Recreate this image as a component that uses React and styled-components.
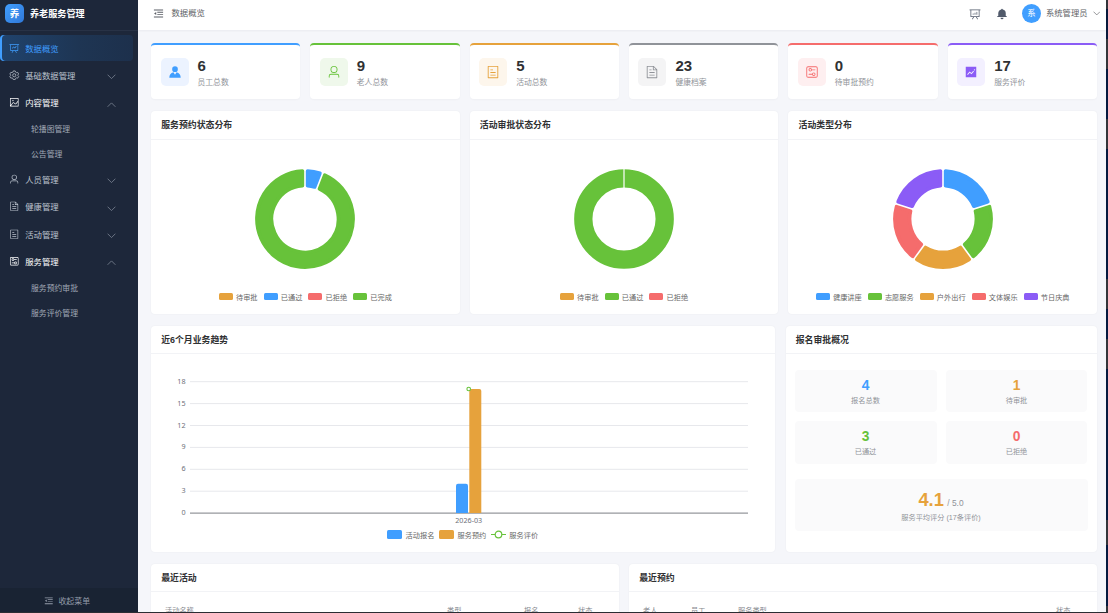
import React from 'react'
import styled, { createGlobalStyle, css } from 'styled-components'

const BLUE = '#409eff'
const GREEN = '#67c23a'
const ORANGE = '#e6a23c'
const RED = '#f56c6c'
const PURPLE = '#8b5cf6'
const GRAY = '#909399'

const icons = {
  dataLine: 'M359.168 768H160a32 32 0 0 1-32-32V192H64a32 32 0 0 1 0-64h896a32 32 0 1 1 0 64h-64v544a32 32 0 0 1-32 32H665.216l110.848 192h-73.856L591.36 768H433.024L322.176 960H248.32zM832 192H192v512h640zM342.656 534.656a32 32 0 1 1-45.312-45.312L444.992 341.76l125.44 94.08L679.04 300.032a32 32 0 1 1 49.92 39.936L581.632 524.224 451.008 426.24 342.656 534.592z',
  dataAnalysis: 'm665.216 768 110.848 192h-73.856L591.36 768H433.024L322.176 960H248.32l110.848-192H160a32 32 0 0 1-32-32V192H64a32 32 0 0 1 0-64h896a32 32 0 1 1 0 64h-64v544a32 32 0 0 1-32 32zM832 192H192v512h640zM352 448a32 32 0 0 1 32 32v64a32 32 0 0 1-64 0v-64a32 32 0 0 1 32-32m160-64a32 32 0 0 1 32 32v128a32 32 0 0 1-64 0V416a32 32 0 0 1 32-32m160-64a32 32 0 0 1 32 32v192a32 32 0 1 1-64 0V352a32 32 0 0 1 32-32',
  document: 'M832 384H576V128H192v768h640zm-26.496-64L640 154.496V320zM160 64h480l256 256v608a32 32 0 0 1-32 32H160a32 32 0 0 1-32-32V96a32 32 0 0 1 32-32m160 448h384v64H320zm0-192h160v64H320zm0 384h384v64H320z',
  tickets: 'M192 128v768h640V128zm-32-64h704a32 32 0 0 1 32 32v832a32 32 0 0 1-32 32H160a32 32 0 0 1-32-32V96a32 32 0 0 1 32-32m160 448h384v64H320zm0-192h192v64H320zm0 384h384v64H320z',
  user: 'M512 512a192 192 0 1 0 0-384 192 192 0 0 0 0 384m0 64a256 256 0 1 1 0-512 256 256 0 0 1 0 512m320 320v-96a96 96 0 0 0-96-96H288a96 96 0 0 0-96 96v96a32 32 0 1 1-64 0v-96a160 160 0 0 1 160-160h448a160 160 0 0 1 160 160v96a32 32 0 1 1-64 0',
  avatar: 'M628.736 528.896A416 416 0 0 1 928 928H96a415.872 415.872 0 0 1 299.264-399.104L512 704zM720 304a208 208 0 1 1-416 0 208 208 0 0 1 416 0',
  setUp: 'M224 160a64 64 0 0 0-64 64v576a64 64 0 0 0 64 64h576a64 64 0 0 0 64-64V224a64 64 0 0 0-64-64zm0-64h576a128 128 0 0 1 128 128v576a128 128 0 0 1-128 128H224A128 128 0 0 1 96 800V224A128 128 0 0 1 224 96M384 416a64 64 0 1 0 0-128 64 64 0 0 0 0 128m0 64a128 128 0 1 1 0-256 128 128 0 0 1 0 256M480 320h256q32 0 32 32t-32 32H480q-32 0-32-32t32-32m160 416a64 64 0 1 0 0-128 64 64 0 0 0 0 128m0 64a128 128 0 1 1 0-256 128 128 0 0 1 0 256M288 640h256q32 0 32 32t-32 32H288q-32 0-32-32t32-32',
  picture: 'M160 160v704h704V160zm-32-64h768a32 32 0 0 1 32 32v768a32 32 0 0 1-32 32H128a32 32 0 0 1-32-32V128a32 32 0 0 1 32-32M384 288q64 0 64 64t-64 64-64-64 64-64M185.408 876.992l-50.816-38.912L350.72 556.032a96 96 0 0 1 134.592-17.856l1.856 1.472 122.88 99.136a32 32 0 0 0 44.992-4.864l216-269.888 49.92 39.936-215.808 269.824-.256.32a96 96 0 0 1-135.04 14.464l-122.88-99.072-.64-.512a32 32 0 0 0-44.8 5.952z',
  trend: 'M128 896V128h768v768zm291.712-327.296 128 102.4 180.16-201.792-47.744-42.624-139.84 156.608-128-102.4-180.16 201.792 47.744 42.624zM816 352a48 48 0 1 0-96 0 48 48 0 0 0 96 0',
  bell: 'M640 832a128 128 0 0 1-256 0zm192-64H134.4a38.4 38.4 0 0 1 0-76.8H192V448c0-154.88 110.08-284.16 256.32-313.6a64 64 0 1 1 127.36 0A320.13 320.13 0 0 1 832 448v243.2h57.6a38.4 38.4 0 0 1 0 76.8z',
  fold: 'M940 150H84v92h856zm0 210H400v80h540zm0 220H400v80h540zm0 204H84v92h856zM300 380 100 512l200 132z',
}

function Icon({ name, size = 11 }) {
  if (name === 'setting') {
    return (
      <svg width={size} height={size} viewBox="0 0 1024 1024" fill="none" stroke="currentColor" strokeWidth="74" strokeLinejoin="round">
        <path d="M420 90h184l40 118 84 48 122-24 92 158-82 94v56l82 94-92 158-122-24-84 48-40 118H420l-40-118-84-48-122 24-92-158 82-94v-56l-82-94 92-158 122 24 84-48z" />
        <circle cx="512" cy="512" r="155" />
      </svg>
    )
  }
  return (
    <svg width={size} height={size} viewBox="0 0 1024 1024" fill="currentColor">
      <path d={icons[name]} />
    </svg>
  )
}

function Arrow({ up, width = 9 }) {
  return (
    <svg width={width} height={width / 2 + 1} viewBox="0 0 9 5.5" fill="none" stroke="currentColor" strokeWidth="0.8">
      <path d={up ? 'M0.6 4.8 4.5 0.9 8.4 4.8' : 'M0.6 0.7 4.5 4.6 8.4 0.7'} />
    </svg>
  )
}

const menu = [
  { icon: 'dataLine', label: '数据概览', active: true },
  { icon: 'setting', label: '基础数据管理', children: [] },
  { icon: 'picture', label: '内容管理', open: true, children: ['轮播图管理', '公告管理'] },
  { icon: 'user', label: '人员管理', children: [] },
  { icon: 'document', label: '健康管理', children: [] },
  { icon: 'tickets', label: '活动管理', children: [] },
  { icon: 'setUp', label: '服务管理', open: true, children: ['服务预约审批', '服务评价管理'] },
]

const stats = [
  { icon: 'avatar', value: 6, label: '员工总数', color: BLUE, bg: '#ecf3ff' },
  { icon: 'user', value: 9, label: '老人总数', color: GREEN, bg: '#eff8eb' },
  { icon: 'tickets', value: 5, label: '活动总数', color: ORANGE, bg: '#fdf6ec' },
  { icon: 'document', value: 23, label: '健康档案', color: GRAY, bg: '#f4f4f5' },
  { icon: 'setUp', value: 0, label: '待审批预约', color: RED, bg: '#feeff0' },
  { icon: 'trend', value: 17, label: '服务评价', color: PURPLE, bg: '#f3f0ff' },
]

const pies = [
  {
    title: '服务预约状态分布',
    slices: [[1, BLUE], [16, GREEN]],
    legend: [['待审批', ORANGE], ['已通过', BLUE], ['已拒绝', RED], ['已完成', GREEN]],
  },
  {
    title: '活动审批状态分布',
    slices: [[5, GREEN]],
    legend: [['待审批', ORANGE], ['已通过', GREEN], ['已拒绝', RED]],
  },
  {
    title: '活动类型分布',
    slices: [[1, BLUE], [1, GREEN], [1, ORANGE], [1, RED], [1, PURPLE]],
    legend: [['健康讲座', BLUE], ['志愿服务', GREEN], ['户外出行', ORANGE], ['文体娱乐', RED], ['节日庆典', PURPLE]],
  },
]

const approvals = [
  { value: 4, label: '报名总数', color: BLUE },
  { value: 1, label: '待审批', color: ORANGE },
  { value: 3, label: '已通过', color: GREEN },
  { value: 0, label: '已拒绝', color: RED },
]

// ring sector whose corners are rounded by a stroke of the same colour
function sector(start, end) {
  const round = 1.8
  const outer = 49.9 - round
  const inner = 31.6 + round
  const off = 0.8 + round
  const a = Math.asin(off / outer)
  const b = Math.asin(off / inner)
  const at = (r, t) => `${(r * Math.sin(t)).toFixed(3)} ${(-r * Math.cos(t)).toFixed(3)}`
  const large = end - start > Math.PI ? 1 : 0
  return `M${at(outer, start + a)}A${outer} ${outer} 0 ${large} 1 ${at(outer, end - a)}L${at(inner, end - b)}A${inner} ${inner} 0 ${large} 0 ${at(inner, start + b)}Z`
}

function Donut({ slices }) {
  const total = slices.reduce((sum, [value]) => sum + value, 0)
  let angle = 0
  // a single slice is a full ring with only a seam at the top
  if (slices.length === 1) {
    return (
      <svg width="100" height="100" viewBox="-50 -50 100 100">
        <circle r="40.7" fill="none" stroke={slices[0][1]} strokeWidth="18.3" />
        <path d="M0-50V-31" stroke="#fff" strokeWidth="1.2" />
      </svg>
    )
  }
  return (
    <svg width="100" height="100" viewBox="-50 -50 100 100">
      {slices.map(([value, color]) => {
        const start = angle
        angle += (value / total) * Math.PI * 2
        return <path key={color} d={sector(start, angle)} fill={color} stroke={color} strokeWidth="3.6" strokeLinejoin="round" />
      })}
    </svg>
  )
}

function TrendChart() {
  const y = (v) => 141.5 - v * 7.3
  return (
    <ChartSvg width="623" height="160" viewBox="0 0 623 160">
      {[18, 15, 12, 9, 6, 3, 0].map((v) => (
        <g key={v}>
          <line
            x1="39"
            x2="597"
            y1={y(v) - 0.4}
            y2={y(v) - 0.4}
            stroke={v ? '#e7e8ec' : '#96989d'}
            strokeWidth={v ? 1 : 1.2}
          />
          <text x="34.5" y={y(v) + 1.6} textAnchor="end">{v}</text>
        </g>
      ))}
      <path d={`M305 141V${y(4) + 1.5}q0-2 2-2h8q2 0 2 2V141z`} fill={BLUE} />
      <path d={`M318.3 141V${y(17) + 1.5}q0-2 2-2h8q2 0 2 2V141z`} fill={ORANGE} />
      <circle cx="317.7" cy={y(17) - 0.4} r="1.8" fill="#fff" stroke={GREEN} strokeWidth="1.1" />
      <text x="317.7" y="151.3" textAnchor="middle">2026-03</text>
    </ChartSvg>
  )
}

function App() {
  return (
    <Screen>
      <GlobalStyle />
      <Sidebar>
        <Brand>
          <BrandMark>养</BrandMark>
          养老服务管理
        </Brand>
        <Menu>
          {menu.map((item) => (
            <React.Fragment key={item.label}>
              <MenuItem $active={item.active} $open={item.open}>
                <Icon name={item.icon} size={10.5} />
                <MenuLabel>{item.label}</MenuLabel>
                {item.children && <MenuArrow><Arrow up={item.open} /></MenuArrow>}
              </MenuItem>
              {item.open && item.children.map((child) => <SubItem key={child}>{child}</SubItem>)}
            </React.Fragment>
          ))}
        </Menu>
        <Collapse>
          <Icon name="fold" size={9.5} />
          收起菜单
        </Collapse>
      </Sidebar>

      <Page>
        <TopBar>
          <FoldButton><Icon name="fold" size={11} /></FoldButton>
          <Crumb>数据概览</Crumb>
          <Tools>
            <Icon name="dataAnalysis" size={12} />
            <Icon name="bell" size={12} />
            <UserMenu>
              <Avatar>系</Avatar>
              <UserName>系统管理员</UserName>
              <Arrow width={7.5} />
            </UserMenu>
          </Tools>
        </TopBar>

        <Content>
          <StatRow>
            {stats.map((s) => (
              <StatCard key={s.label} $color={s.color}>
                <StatIcon $color={s.color} $bg={s.bg}><Icon name={s.icon} size={14} /></StatIcon>
                <div>
                  <StatValue>{s.value}</StatValue>
                  <StatLabel>{s.label}</StatLabel>
                </div>
              </StatCard>
            ))}
          </StatRow>

          <PieRow>
            {pies.map((p) => (
              <Card key={p.title}>
                <CardTitle>{p.title}</CardTitle>
                <PieBody>
                  <Donut slices={p.slices} />
                  <Legend>
                    {p.legend.map(([label, color]) => (
                      <LegendItem key={label}><Swatch $color={color} />{label}</LegendItem>
                    ))}
                  </Legend>
                </PieBody>
              </Card>
            ))}
          </PieRow>

          <TrendRow>
            <Card>
              <CardTitle>近6个月业务趋势</CardTitle>
              <TrendBody>
                <TrendChart />
                <TrendLegend>
                  <LegendItem><Swatch $color={BLUE} $wide />活动报名</LegendItem>
                  <LegendItem><Swatch $color={ORANGE} $wide />服务预约</LegendItem>
                  <LegendItem>
                    <LineMark width="15" height="9" viewBox="0 0 15 9" fill="none" stroke={GREEN} strokeWidth="1.2">
                      <path d="M0 4.5h4M11 4.5h4" />
                      <circle cx="7.5" cy="4.5" r="3.3" />
                    </LineMark>
                    服务评价
                  </LegendItem>
                </TrendLegend>
              </TrendBody>
            </Card>
            <Card>
              <CardTitle>报名审批概况</CardTitle>
              <ApprovalGrid>
                {approvals.map((a) => (
                  <ApprovalBox key={a.label}>
                    <ApprovalValue $color={a.color}>{a.value}</ApprovalValue>
                    <SmallLabel>{a.label}</SmallLabel>
                  </ApprovalBox>
                ))}
              </ApprovalGrid>
              <ScoreBox>
                <Score>4.1<small>/ 5.0</small></Score>
                <SmallLabel>服务平均评分 (17条评价)</SmallLabel>
              </ScoreBox>
            </Card>
          </TrendRow>

          <TableRow>
            <Card>
              <CardTitle>最近活动</CardTitle>
              <TableHead $columns="282px 77px 54px 1fr">
                <span>活动名称</span><span>类型</span><span>报名</span><span>状态</span>
              </TableHead>
            </Card>
            <Card>
              <CardTitle>最近预约</CardTitle>
              <TableHead $columns="48px 47px 318px 1fr">
                <span>老人</span><span>员工</span><span>服务类型</span><span>状态</span>
              </TableHead>
            </Card>
          </TableRow>
        </Content>
      </Page>
    </Screen>
  )
}

export default App

const GlobalStyle = createGlobalStyle`
  * {
    box-sizing: border-box;
  }
  body {
    margin: 0;
    overflow: hidden;
    font-family: "Liberation Sans", "Noto Sans CJK SC", sans-serif;
  }
  svg {
    display: block;
    flex: none;
  }
`

const Screen = styled.div`
  display: flex;
  width: 1108px;
  height: 613px;
  overflow: hidden;
  border-bottom: 1px solid #2b2d33;
  background: linear-gradient(#33353a 0 9px, #081a3c 9px 39px, #33353a 39px 69px, #04193f 69px 119px, #33353a 119px 149px, #04193f 149px 279px, #33353a 279px 309px, #04193f 309px 339px, #33353a 339px 369px, #04193f 369px 520px, #33353a 520px 545px, #04193f 545px 606px, #33353a 606px);
`
const Sidebar = styled.div`
  display: flex;
  flex-direction: column;
  width: 138px;
  flex: none;
  background: #1d273a;
`
const Brand = styled.div`
  display: flex;
  align-items: center;
  height: 31px;
  padding: 0 0 3.5px 5px;
  gap: 6px;
  border-bottom: 1px solid #283246;
  color: #fff;
  font-size: 9.1px;
  font-weight: bold;
`
const BrandMark = styled.div`
  width: 19px;
  height: 19px;
  border-radius: 5px;
  background: linear-gradient(135deg, #409eff, #3078d8);
  font-size: 9.5px;
  line-height: 19px;
  text-align: center;
`
const Menu = styled.div`
  flex: 1;
  padding: 3.5px 5px 0 0;
`
const MenuItem = styled.div`
  display: flex;
  align-items: center;
  height: 26.6px;
  margin-bottom: 0.7px;
  padding: 0 17.5px 0 9.2px;
  color: #bcc3ce;
  font-size: 8.4px;
  ${(p) => p.$open && css`
    color: #fff;
  `}
  ${(p) => p.$active && css`
    color: ${BLUE};
    background: linear-gradient(90deg, #20436d, #1e3553 60%, #1d304c);
    border-radius: 4px;
    box-shadow: inset 2px 0 0 ${BLUE};
  `}
`
const MenuLabel = styled.span`
  margin-left: 5.5px;
  padding-bottom: 0.5px;
  white-space: nowrap;
`
const MenuArrow = styled.span`
  margin-left: auto;
  padding-top: 4px;
  color: #7e8795;
`
const SubItem = styled.div`
  height: 24.8px;
  padding-left: 31px;
  color: #a0a8b5;
  font-size: 7.85px;
  line-height: 27.6px;
`
const Collapse = styled.div`
  display: flex;
  align-items: center;
  justify-content: center;
  gap: 5px;
  height: 24px;
  padding: 1px 4px 0 0;
  background: #192333;
  color: #959dab;
  font-size: 7.9px;
`

const Page = styled.div`
  display: flex;
  flex-direction: column;
  width: 968px;
  background: #f5f6fa;
`
const TopBar = styled.div`
  display: flex;
  align-items: center;
  flex: none;
  height: 30px;
  padding: 0 6px 3px 15px;
  background: #fff;
  box-shadow: 0 1px 2px rgba(0, 21, 41, 0.05);
  color: #606266;
`
const FoldButton = styled.div`
  color: #5a5e66;
`
const Crumb = styled.div`
  margin-left: 7.5px;
  padding-bottom: 2.5px;
  font-size: 8.4px;
`
const Tools = styled.div`
  display: flex;
  align-items: center;
  gap: 14.5px;
  margin-left: auto;
  color: #515a6b;
`
const UserMenu = styled.div`
  display: flex;
  align-items: center;
  gap: 5px;
  color: #606266;
`
const UserName = styled.span`
  padding-bottom: 2.5px;
  font-size: 8.3px;
`
const Avatar = styled.div`
  width: 19px;
  height: 19px;
  border-radius: 50%;
  background: ${BLUE};
  color: #fff;
  font-size: 8.4px;
  line-height: 19px;
  text-align: center;
`

const Content = styled.div`
  padding: 12.5px 9px 0 13px;
`
const StatRow = styled.div`
  display: grid;
  grid-template-columns: repeat(6, 1fr);
  gap: 10px;
`
const StatCard = styled.div`
  display: flex;
  align-items: center;
  gap: 9px;
  height: 56px;
  padding: 0 9.5px 0;
  border-top: 2px solid ${(p) => p.$color};
  border-radius: 4px;
  background: #fff;
  box-shadow: 0 1px 2px rgba(0, 0, 0, 0.03);
`
const StatIcon = styled.div`
  display: flex;
  align-items: center;
  justify-content: center;
  width: 28px;
  height: 28px;
  border-radius: 5px;
  color: ${(p) => p.$color};
  background: ${(p) => p.$bg};
`
const StatValue = styled.div`
  color: #303133;
  font-size: 15px;
  font-weight: bold;
  line-height: 18px;
  padding-top: 1px;
`
const StatLabel = styled.div`
  color: #909399;
  font-size: 7.8px;
  line-height: 11px;
  padding-top: 2px;
`

const Card = styled.div`
  border-radius: 4px;
  background: #fff;
  box-shadow: 0 0 2px rgba(0, 0, 0, 0.05);
`
const CardTitle = styled.div`
  height: 28.5px;
  padding-left: 10.2px;
  border-bottom: 1px solid #f2f3f6;
  color: #303133;
  font-size: 8.9px;
  font-weight: bold;
  line-height: 29.4px;
`
const PieRow = styled.div`
  display: grid;
  grid-template-columns: repeat(3, 1fr);
  gap: 10px;
  height: 202.5px;
  margin-top: 12.5px;
`
const PieBody = styled.div`
  display: flex;
  flex-direction: column;
  align-items: center;
  padding-top: 29.5px;
`
const Legend = styled.div`
  display: flex;
  gap: 6px;
  margin-top: 22px;
`
const LegendItem = styled.div`
  display: flex;
  align-items: center;
  height: 11px;
  color: #666;
  font-size: 7.2px;
  white-space: nowrap;
`
const Swatch = styled.span`
  width: ${(p) => (p.$wide ? '15px' : '14px')};
  height: ${(p) => (p.$wide ? '8.5px' : '7.5px')};
  margin-right: 3.2px;
  border-radius: 1.5px;
  background: ${(p) => p.$color};
`

const TrendRow = styled.div`
  display: grid;
  grid-template-columns: 623.5px 1fr;
  gap: 11px;
  height: 226.5px;
  margin-top: 12px;
`
const TrendBody = styled.div`
  padding-top: 17.7px;
`
const ChartSvg = styled.svg`
  text {
    font-family: "Noto Sans", sans-serif;
    font-size: 7.2px;
    fill: #6e7079;
  }
`
const TrendLegend = styled.div`
  display: flex;
  justify-content: center;
  gap: 5px;
  margin-top: -2.5px;
`
const LineMark = styled.svg`
  margin-right: 3px;
`

const ApprovalGrid = styled.div`
  display: grid;
  grid-template-columns: 142px 141px;
  gap: 9.5px;
  padding: 15.6px 9px 0;
`
const ApprovalBox = styled.div`
  height: 42.3px;
  padding-top: 8px;
  border-radius: 4px;
  background: #fafafb;
  text-align: center;
`
const ApprovalValue = styled.div`
  color: ${(p) => p.$color};
  font-size: 13.8px;
  font-weight: bold;
  line-height: 15px;
`
const SmallLabel = styled.div`
  color: #909399;
  font-size: 7.2px;
  line-height: 10px;
  padding-top: 3px;
`
const ScoreBox = styled.div`
  height: 52.5px;
  margin: 15px 9.5px 0 9px;
  padding-top: 10px;
  border-radius: 4px;
  background: #fafafb;
  text-align: center;
`
const Score = styled.div`
  height: 21px;
  color: ${ORANGE};
  font-size: 18.3px;
  font-weight: bold;
  line-height: 21px;
  small {
    margin-left: 3.5px;
    color: #909399;
    font-size: 8.4px;
    font-weight: normal;
    line-height: 1;
  }
`

const TableRow = styled.div`
  display: grid;
  grid-template-columns: 1fr 1fr;
  gap: 10px;
  height: 90px;
  margin-top: 11.5px;
`
const TableHead = styled.div`
  display: grid;
  grid-template-columns: ${(p) => p.$columns};
  padding: 12.5px 0 0 14px;
  color: #85888e;
  font-size: 7.2px;
  line-height: 12px;
  white-space: nowrap;
`
